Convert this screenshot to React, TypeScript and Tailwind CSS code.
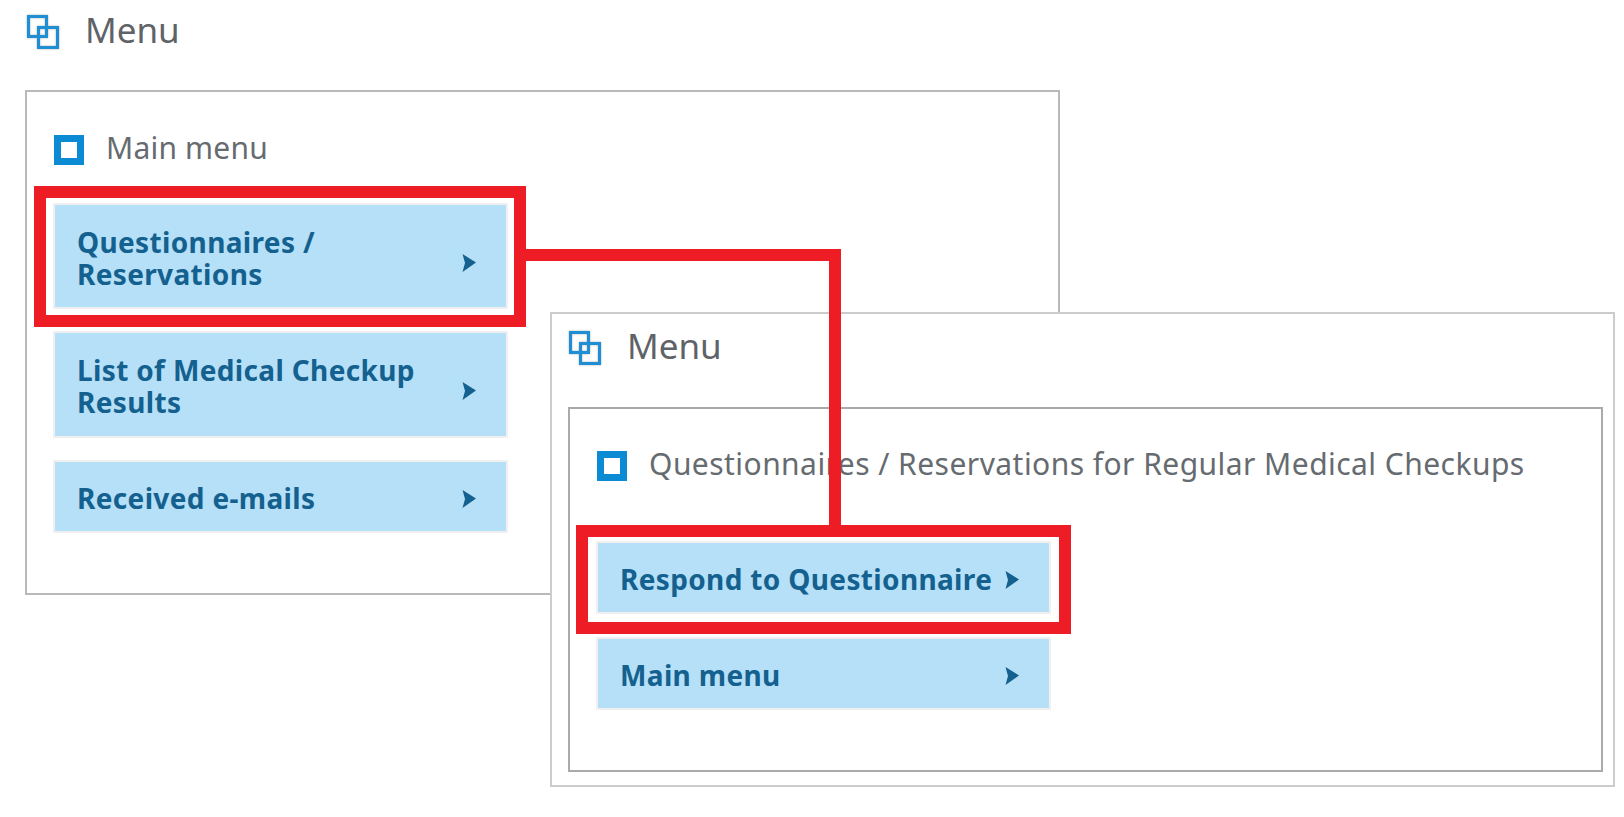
const FONT = '"Noto Sans", "DejaVu Sans", sans-serif';

function MenuIcon() {
  return (
    <svg width="36" height="38" viewBox="0 0 36 38" className="shrink-0 drop-shadow-[0_0_1px_rgba(0,0,0,0.3)]">
      <rect x="3.5" y="5.5" width="18" height="20" fill="none" stroke="#1e8fd5" strokeWidth="3" />
      <rect x="13.5" y="16.5" width="19" height="20" fill="none" stroke="#1e8fd5" strokeWidth="3" />
    </svg>
  );
}

function Heading({ text, className = '' }: { text: string; className?: string }) {
  return (
    <div className={`flex items-center gap-[24px] h-[44px] text-[35px] leading-[44px] text-[#5f6368] ${className}`}>
      <MenuIcon />
      <span>{text}</span>
    </div>
  );
}

function SubHeading({ text, className = '' }: { text: string; className?: string }) {
  return (
    <div className={`flex items-center gap-[22px] h-[40px] text-[30px] leading-[40px] text-[#666b70] ${className}`}>
      <span className="w-[30px] h-[30px] mt-[4px] border-[7px] border-[#0b8bd3] bg-white shrink-0" />
      <span>{text}</span>
    </div>
  );
}

function Arrow({ className }: { className: string }) {
  return (
    <svg width="14" height="18" viewBox="0 0 14 18" className={`shrink-0 ${className}`}>
      <path d="M0.5 0 L14 8.5 L0.5 18 L3 9 Z" fill="#14608f" />
    </svg>
  );
}

function Highlight({ className }: { className: string }) {
  return <div className={`absolute border-[12px] border-[#ee1c25] pointer-events-none ${className}`} />;
}

interface MenuButtonProps {
  label: React.ReactNode;
  className: string;
  arrowClassName: string;
  children?: React.ReactNode;
}

function MenuButton({ label, className, arrowClassName, children }: MenuButtonProps) {
  return (
    <div className={`relative flex items-center justify-between bg-[#b5e0f7] shadow-[0_0_0_2px_#f0f0f0] pl-[22px] pr-[30px] text-[28px] leading-[32px] tracking-[0.35px] font-bold text-[#14608f] ${className}`}>
      <span className="pt-[3px]">{label}</span>
      <Arrow className={arrowClassName} />
      {children}
    </div>
  );
}

export default function App() {
  return (
    <div className="relative w-[1624px] h-[817px] overflow-hidden bg-white" style={{ fontFamily: FONT }}>
      <div className="pl-[25px] pt-[8px]">
        <Heading text="Menu" />
      </div>

      <div className="ml-[25px] mt-[38px] w-[1035px] h-[505px] border-2 border-[#b9b9b9] pt-[36px] pl-[27px]">
        <SubHeading text="Main menu" className="tracking-[0.2px]" />
        <div className="flex flex-col gap-[26px] mt-[37px] ml-[1px] w-[451px]">
          <MenuButton label={<>Questionnaires /<br />Reservations</>} className="h-[102px]" arrowClassName="mt-[14px]">
            <Highlight className="-left-[21px] -right-[20px] -top-[19px] -bottom-[20px]" />
          </MenuButton>
          <MenuButton label={<>List of Medical Checkup<br />Results</>} className="h-[103px]" arrowClassName="mt-[12px]" />
          <MenuButton label="Received e-mails" className="h-[69px]" arrowClassName="mt-[4px]" />
        </div>
      </div>

      <div className="absolute left-[550px] top-[312px] w-[1065px] h-[475px] bg-white border-2 border-[#cccccc] pt-[10px] pl-[16px]">
        <Heading text="Menu" className="-ml-[1px]" />
        <div className="mt-[39px] w-[1035px] h-[365px] border-2 border-[#aaaaaa] pt-[35px] pl-[27px]">
          <SubHeading text="Questionnaires / Reservations for Regular Medical Checkups" className="tracking-[0.45px]" />
          <div className="flex flex-col gap-[27px] mt-[59px] ml-[1px] w-[451px]">
            <MenuButton label="Respond to Questionnaire" className="h-[69px]" arrowClassName="mt-[5px]">
              <Highlight className="-left-[22px] -right-[22px] -top-[18px] -bottom-[22px]" />
            </MenuButton>
            <MenuButton label="Main menu" className="h-[69px]" arrowClassName="mt-[4px]" />
          </div>
        </div>
      </div>

      {/* connector between the two highlighted buttons */}
      <div className="absolute left-[526px] top-[249px] w-[315px] h-[276px] border-t-[12px] border-r-[12px] border-[#ee1c25]" />
    </div>
  );
}
